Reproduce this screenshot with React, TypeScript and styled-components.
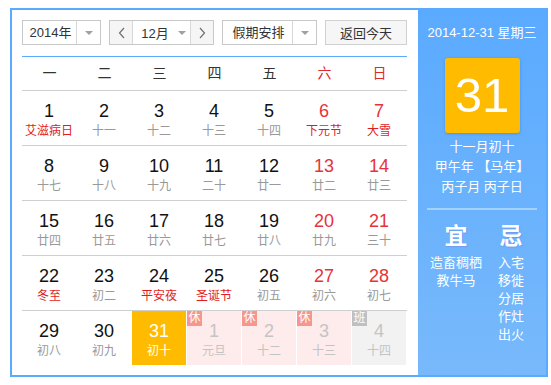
import React from "react";
import styled, { createGlobalStyle, css } from "styled-components";

const GlobalStyle = createGlobalStyle`
  html, body { margin: 0; padding: 0; background: #fff; }
  body { font-family: "Liberation Sans", Arial, "Noto Sans CJK SC", sans-serif; color: #333; }
  * { box-sizing: border-box; }
`;

const Frame = styled.div`
  margin: 8px 0 0 10px;
  width: 538px;
  height: 369px;
  border: 2px solid #5aaaff;
  display: flex;
`;

const Main = styled.div`
  width: 406px;
  padding: 10px 11px 10px 10px;
  display: flex;
  flex-direction: column;
`;

const Toolbar = styled.div`
  display: flex;
  justify-content: space-between;
  height: 25px;
  font-size: 13px;
  color: #333;
`;

const Select = styled.div<{ $w: number }>`
  width: ${(p) => p.$w}px;
  height: 25px;
  border: 1px solid #c8c8c8;
  background: #fff;
  display: flex;
`;

const SelectLabel = styled.div`
  flex: 1;
  display: flex;
  align-items: center;
  justify-content: center;
  line-height: 23px;
  padding-left: 2px;
`;

const SelectArrow = styled.div`
  width: 24px;
  border-left: 1px solid #d8d8d8;
  display: flex;
  align-items: center;
  justify-content: center;
`;

const Tri = styled.span`
  display: inline-block;
  width: 0;
  height: 0;
  border-left: 4px solid transparent;
  border-right: 4px solid transparent;
  border-top: 4px solid #a0a0a0;
`;

const MonthGroup = styled.div`
  width: 105px;
  height: 25px;
  border: 1px solid #c8c8c8;
  display: flex;
`;

const NavBtn = styled.div<{ $side: "l" | "r" }>`
  width: 23px;
  background: #f5f5f5;
  display: flex;
  align-items: center;
  justify-content: center;
  ${(p) => (p.$side === "l" ? css`border-right: 1px solid #d8d8d8;` : css`border-left: 1px solid #d8d8d8;`)}
`;

const MonthLabel = styled.div`
  flex: 1;
  display: flex;
  align-items: center;
  justify-content: center;
  gap: 9px;
  padding-left: 4px;
`;

const TodayBtn = styled.div`
  width: 82px;
  height: 25px;
  border: 1px solid #d0d0d0;
  background: #f6f6f6;
  display: flex;
  align-items: center;
  justify-content: center;
  font-size: 13px;
`;

const Calendar = styled.div`
  margin-top: 11px;
  border-top: 1px solid #5aaaff;
`;

const HeaderRow = styled.div`
  display: grid;
  grid-template-columns: repeat(7, 55px);
  height: 33px;
`;

const HeadCell = styled.div<{ $weekend: boolean }>`
  text-align: center;
  font-size: 14px;
  line-height: 33px;
  color: ${(p) => (p.$weekend ? "#e0282c" : "#333")};
`;

const WeekRow = styled.div`
  display: grid;
  grid-template-columns: repeat(7, 55px);
  border-top: 1px solid #cfcfcf;
`;

type Kind = "normal" | "today" | "rest" | "work";

const Cell = styled.div<{ $kind: Kind }>`
  position: relative;
  width: 54px;
  height: 54px;
  padding-top: 10px;
  text-align: center;
  background: ${(p) =>
    p.$kind === "today" ? "#ffbb00" : p.$kind === "rest" ? "#fdeceb" : p.$kind === "work" ? "#f2f2f2" : "transparent"};
`;

const DayNum = styled.div<{ $color: string }>`
  font-size: 18px;
  line-height: 20px;
  color: ${(p) => p.$color};
`;

const Lunar = styled.div<{ $color: string }>`
  font-size: 12px;
  line-height: 20px;
  color: ${(p) => p.$color};
  white-space: nowrap;
`;

const Badge = styled.span<{ $kind: "rest" | "work" }>`
  position: absolute;
  top: 0;
  left: 0;
  width: 15px;
  height: 15px;
  font-size: 12px;
  line-height: 15px;
  text-align: center;
  color: #fff;
  background: ${(p) => (p.$kind === "rest" ? "#f6968c" : "#c0c0c0")};
`;

const Panel = styled.div`
  width: 130px;
  background: linear-gradient(#5aaaff, #78b9fb);
  color: #fff;
  display: flex;
  flex-direction: column;
  align-items: center;
  padding-top: 13px;
`;

const PanelDate = styled.div`
  font-size: 13px;
  line-height: 20px;
  white-space: nowrap;
`;

const BigDay = styled.div`
  margin-top: 15px;
  width: 75px;
  height: 75px;
  border-radius: 3px;
  background: #ffbb00;
  box-shadow: 0 1px 3px rgba(40, 90, 160, 0.35);
  display: flex;
  align-items: center;
  justify-content: center;
  font-size: 49px;
  line-height: 75px;
  color: #fff;
`;

const PanelInfo = styled.div`
  margin-top: 4px;
  font-size: 13px;
  line-height: 20px;
  text-align: center;
  white-space: nowrap;
`;

const Divider = styled.div`
  margin-top: 11px;
  width: 110px;
  height: 2px;
  background: rgba(255, 255, 255, 0.4);
`;

const YiJi = styled.div`
  margin-top: 12px;
  align-self: stretch;
  padding-left: 12px;
  display: grid;
  grid-template-columns: 52px 26px;
  column-gap: 16px;
`;

const YiJiCol = styled.div`
  display: flex;
  flex-direction: column;
  align-items: center;
`;

const YiJiTitle = styled.div`
  font-size: 23px;
  font-weight: bold;
  line-height: 28px;
  text-shadow: 1px 1px 1px rgba(120, 80, 200, 0.25);
  margin-bottom: 4px;
`;

const YiJiItem = styled.div`
  font-size: 13px;
  line-height: 18px;
  white-space: nowrap;
`;

const ChevronLeft = () => (
  <svg width="7" height="12" viewBox="0 0 7 12">
    <polyline points="6,1 1.5,6 6,11" fill="none" stroke="#707070" strokeWidth="1.2" />
  </svg>
);
const ChevronRight = () => (
  <svg width="7" height="12" viewBox="0 0 7 12">
    <polyline points="1,1 5.5,6 1,11" fill="none" stroke="#707070" strokeWidth="1.2" />
  </svg>
);

type Day = { n: number; lunar: string; fest?: boolean; kind?: Kind };

const days: Day[] = [
  { n: 1, lunar: "艾滋病日", fest: true },
  { n: 2, lunar: "十一" },
  { n: 3, lunar: "十二" },
  { n: 4, lunar: "十三" },
  { n: 5, lunar: "十四" },
  { n: 6, lunar: "下元节", fest: true },
  { n: 7, lunar: "大雪", fest: true },
  { n: 8, lunar: "十七" },
  { n: 9, lunar: "十八" },
  { n: 10, lunar: "十九" },
  { n: 11, lunar: "二十" },
  { n: 12, lunar: "廿一" },
  { n: 13, lunar: "廿二" },
  { n: 14, lunar: "廿三" },
  { n: 15, lunar: "廿四" },
  { n: 16, lunar: "廿五" },
  { n: 17, lunar: "廿六" },
  { n: 18, lunar: "廿七" },
  { n: 19, lunar: "廿八" },
  { n: 20, lunar: "廿九" },
  { n: 21, lunar: "三十" },
  { n: 22, lunar: "冬至", fest: true },
  { n: 23, lunar: "初二" },
  { n: 24, lunar: "平安夜", fest: true },
  { n: 25, lunar: "圣诞节", fest: true },
  { n: 26, lunar: "初五" },
  { n: 27, lunar: "初六" },
  { n: 28, lunar: "初七" },
  { n: 29, lunar: "初八" },
  { n: 30, lunar: "初九" },
  { n: 31, lunar: "初十", kind: "today" },
  { n: 1, lunar: "元旦", kind: "rest" },
  { n: 2, lunar: "十二", kind: "rest" },
  { n: 3, lunar: "十三", kind: "rest" },
  { n: 4, lunar: "十四", kind: "work" },
];

const weekdays = ["一", "二", "三", "四", "五", "六", "日"];

export default function App() {
  const weeks: Day[][] = [];
  for (let i = 0; i < days.length; i += 7) weeks.push(days.slice(i, i + 7));

  return (
    <>
      <GlobalStyle />
      <Frame>
        <Main>
          <Toolbar>
            <Select $w={79}>
              <SelectLabel>2014年</SelectLabel>
              <SelectArrow>
                <Tri />
              </SelectArrow>
            </Select>
            <MonthGroup>
              <NavBtn $side="l">
                <ChevronLeft />
              </NavBtn>
              <MonthLabel>
                <span>12月</span>
                <Tri />
              </MonthLabel>
              <NavBtn $side="r">
                <ChevronRight />
              </NavBtn>
            </MonthGroup>
            <Select $w={95}>
              <SelectLabel>假期安排</SelectLabel>
              <SelectArrow>
                <Tri />
              </SelectArrow>
            </Select>
            <TodayBtn>返回今天</TodayBtn>
          </Toolbar>
          <Calendar>
            <HeaderRow>
              {weekdays.map((w, i) => (
                <HeadCell key={w} $weekend={i >= 5}>
                  {w}
                </HeadCell>
              ))}
            </HeaderRow>
            {weeks.map((week, wi) => (
              <WeekRow key={wi}>
                {week.map((d, di) => {
                  const kind: Kind = d.kind ?? "normal";
                  const weekend = di >= 5;
                  let numColor = weekend ? "#e5333a" : "#111";
                  let lunarColor = d.fest ? "#e21c1c" : "#999";
                  if (kind === "today") {
                    numColor = "#fff";
                    lunarColor = "#fff";
                  } else if (kind === "rest" || kind === "work") {
                    numColor = "#c4c4c4";
                    lunarColor = "#c4c4c4";
                  }
                  return (
                    <Cell key={di} $kind={kind}>
                      {kind === "rest" && <Badge $kind="rest">休</Badge>}
                      {kind === "work" && <Badge $kind="work">班</Badge>}
                      <DayNum $color={numColor}>{d.n}</DayNum>
                      <Lunar $color={lunarColor}>{d.lunar}</Lunar>
                    </Cell>
                  );
                })}
              </WeekRow>
            ))}
          </Calendar>
        </Main>
        <Panel>
          <PanelDate>2014-12-31 星期三</PanelDate>
          <BigDay>31</BigDay>
          <PanelInfo>
            十一月初十
            <br />
            甲午年 【马年】
            <br />
            丙子月 丙子日
          </PanelInfo>
          <Divider />
          <YiJi>
            <YiJiCol>
              <YiJiTitle>宜</YiJiTitle>
              <YiJiItem>造畜稠栖</YiJiItem>
              <YiJiItem>教牛马</YiJiItem>
            </YiJiCol>
            <YiJiCol>
              <YiJiTitle>忌</YiJiTitle>
              <YiJiItem>入宅</YiJiItem>
              <YiJiItem>移徙</YiJiItem>
              <YiJiItem>分居</YiJiItem>
              <YiJiItem>作灶</YiJiItem>
              <YiJiItem>出火</YiJiItem>
            </YiJiCol>
          </YiJi>
        </Panel>
      </Frame>
    </>
  );
}
